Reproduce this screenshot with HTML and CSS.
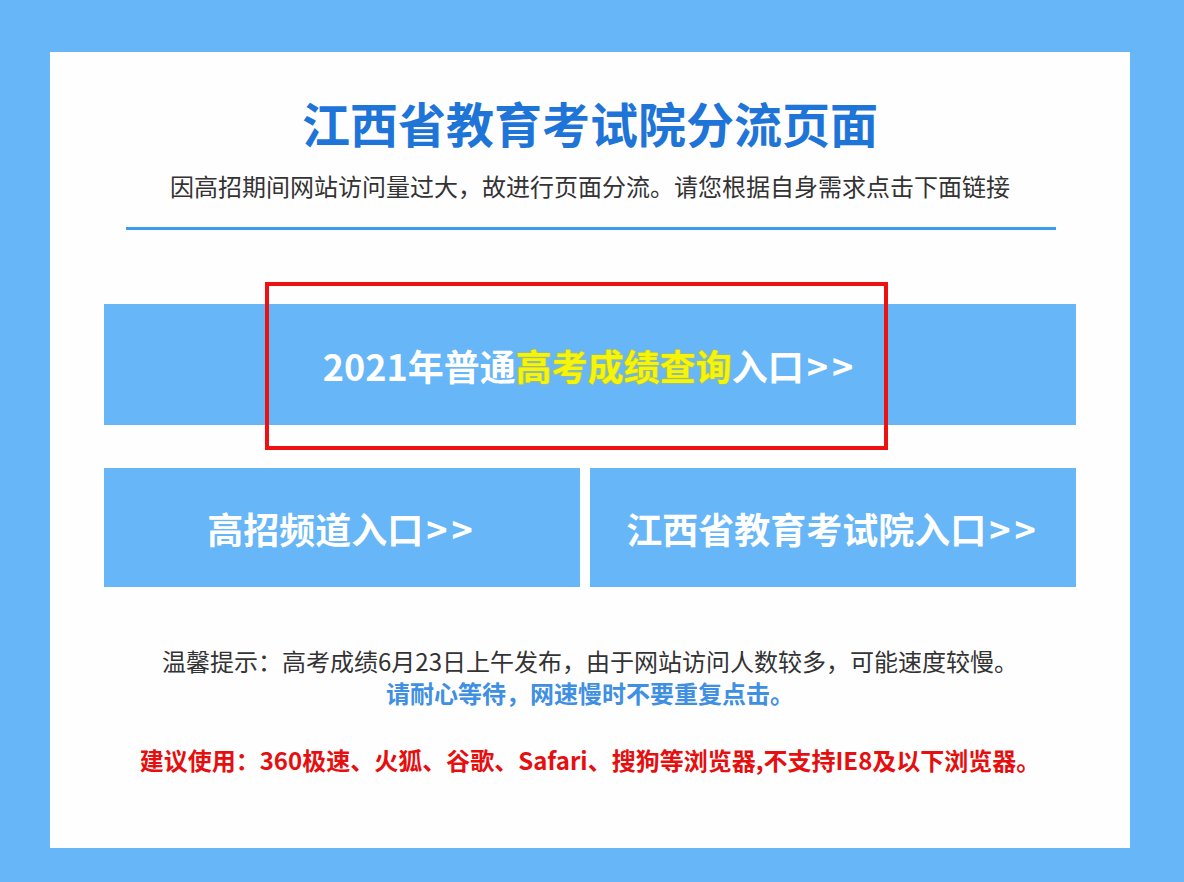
FILE: index.html
```html
<!DOCTYPE html>
<html lang="zh-CN">
<head>
<meta charset="utf-8">
<title>江西省教育考试院分流页面</title>
<link rel="stylesheet" href="styles.css">
</head>
<body>
<div class="panel">
  <h1 class="title">江西省教育考试院分流页面</h1>
  <p class="subtitle">因高招期间网站访问量过大，故进行页面分流。请您根据自身需求点击下面链接</p>
  <div class="rule"></div>
  <div class="main-wrap">
    <a class="btn btn-main" href="#">2021年普通<span class="hl">高考成绩查询</span>入口<span class="arr">&gt;&gt;</span></a>
    <div class="red-box"></div>
  </div>
  <div class="row">
    <a class="btn btn-half" href="#">高招频道入口<span class="arr">&gt;&gt;</span></a>
    <a class="btn btn-half" href="#">江西省教育考试院入口<span class="arr">&gt;&gt;</span></a>
  </div>
  <p class="tip tip-first">温馨提示：高考成绩6月23日上午发布，由于网站访问人数较多，可能速度较慢。</p>
  <p class="tip tip-blue">请耐心等待，网速慢时不要重复点击。</p>
  <p class="tip tip-red">建议使用：360极速、火狐、谷歌、Safari、搜狗等浏览器,不支持IE8及以下浏览器。</p>
</div>
</body>
</html>
```

FILE: styles.css
```css
html, body {
  margin: 0;
  padding: 0;
}
body {
  background: #66b6f8;
  width: 1184px;
  height: 882px;
  overflow: hidden;
  font-family: "Noto Sans CJK SC", "Noto Sans", "Liberation Sans", sans-serif;
}
.panel {
  box-sizing: border-box;
  width: 1080px;
  height: 796px;
  margin: 52px 0 0 50px;
  background: #fefeff;
  padding-top: 40px;
  display: flex;
  flex-direction: column;
}
.title {
  margin: 0;
  text-align: center;
  font-size: 48px;
  line-height: 60px;
  font-weight: 700;
  color: #1f74d8;
}
.subtitle {
  margin: 19px 0 0;
  text-align: center;
  font-size: 24px;
  line-height: 30px;
  color: #333;
}
.rule {
  margin: 26px 74px 0 76px;
  height: 3px;
  background: #3a9ded;
}
.main-wrap {
  position: relative;
  margin: 74px 54px 0;
}
.btn {
  display: flex;
  align-items: center;
  justify-content: center;
  background: #66b6f8;
  color: #fff;
  text-decoration: none;
  font-size: 36px;
  font-weight: 700;
}
.btn-main {
  height: 121px;
}
.hl {
  color: #f4f50a;
  text-shadow: 0 0 2px #e0c800, 0 0 1px #b8b000;
}
.arr {
  letter-spacing: 4px;
  margin-left: 3px;
}
.red-box {
  position: absolute;
  left: 161px;
  top: -22px;
  width: 623px;
  height: 168px;
  box-sizing: border-box;
  border: 4px solid #ee1111;
}
.row {
  margin: 43px 54px 0;
  display: grid;
  grid-template-columns: 476px 486px;
  column-gap: 10px;
}
.btn-half {
  height: 119px;
}
.tip {
  margin: 0;
  text-align: center;
  font-size: 24px;
  line-height: 32px;
  color: #333;
}
.tip-first {
  margin-top: 58px;
}
.tip-blue {
  color: #3f8fe2;
  font-weight: 700;
}
.tip-red {
  margin-top: 35px;
  color: #e60f0f;
  font-weight: 700;
}
```
